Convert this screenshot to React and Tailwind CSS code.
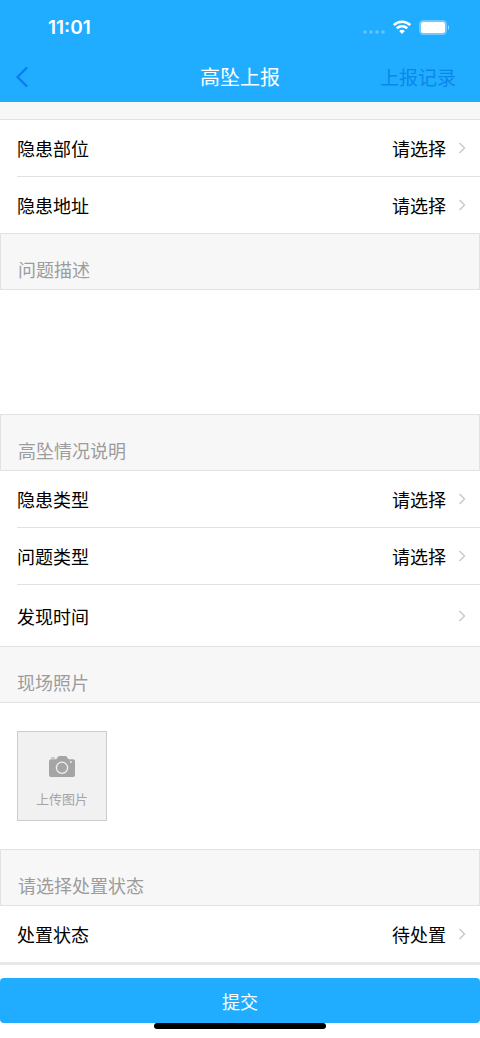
import React, { useState } from 'react';

function Chevron() {
  return (
    <svg width="8" height="12" viewBox="0 0 8 12" fill="none" stroke="#c7c7cc" strokeWidth="1.4" className="flex-shrink-0" aria-hidden="true">
      <path d="M1.5 1l5 5-5 5" />
    </svg>
  );
}

function StatusBar() {
  return (
    <div className="flex h-13 items-center justify-between pl-12 pr-[31px] pt-1">
      <span className="font-['Inter'] text-[19px] leading-7 font-semibold">11:01</span>
      <div className="flex items-center gap-2 pb-[2px]">
        <svg width="22" height="18" viewBox="0 0 22 18" fill="#fff" fillOpacity="0.3" aria-hidden="true">
          <circle cx="2" cy="14" r="1.8" />
          <circle cx="8" cy="14" r="1.8" />
          <circle cx="14" cy="14" r="1.8" />
          <circle cx="20" cy="14" r="1.8" />
        </svg>
        <svg width="18" height="14" viewBox="0 0 18 14" fill="none" stroke="#fff" strokeWidth="2.6" aria-hidden="true">
          <path d="M0.8 5.1a11.8 11.8 0 0 1 16.4 0" />
          <path d="M3.8 8.3a7.5 7.5 0 0 1 10.4 0" />
          <path d="M9 14L6.1 11.1a4.1 4.1 0 0 1 5.800 0z" fill="#fff" stroke="none" />
        </svg>
        <svg width="30" height="15" viewBox="0 0 30 15" fill="#fff" aria-hidden="true">
          <rect width="28" height="15" rx="4.5" fillOpacity="0.35" />
          <rect x="2" y="2" width="24" height="11" rx="2.5" />
          <path d="M29 5.2c1.3.6 1.3 4 0 4.6z" fillOpacity="0.6" />
        </svg>
      </div>
    </div>
  );
}

function NavBar() {
  return (
    <div className="grid h-[50px] grid-cols-3 items-center pl-3 pr-6">
      <button type="button" aria-label="返回" className="justify-self-start p-1">
        <svg width="12" height="20" viewBox="0 0 12 20" fill="none" stroke="#0a7df5" strokeWidth="2.4" strokeLinecap="round" strokeLinejoin="round">
          <path d="M10.500 1L1.500 10l9 9" />
        </svg>
      </button>
      <h1 className="justify-self-center pl-3 text-xl">高坠上报</h1>
      <button type="button" className="justify-self-end text-[19px] text-[#0b87ea]">上报记录</button>
    </div>
  );
}

function SectionTitle({ children, htmlFor, flush }) {
  const Tag = htmlFor ? 'label' : 'h2';
  return (
    <Tag
      htmlFor={htmlFor}
      className={`flex h-[57px] items-center border-[#e2e2e2] bg-[#f7f7f7] px-[17px] pt-[14px] text-lg text-[#9c9c9c] ${flush ? 'border-y' : 'border'}`}
    >
      {children}
    </Tag>
  );
}

function SelectRow({ id, label, options, last }) {
  const [value, setValue] = useState(options[0]);
  return (
    <div className={`ml-[17px] flex items-center justify-between pr-[14px] text-lg text-black ${last ? 'h-14' : 'h-[57px] border-b border-[#e2e2e2]'}`}>
      <label htmlFor={id}>{label}</label>
      <div className="flex items-center gap-3">
        <select
          id={id}
          value={value}
          onChange={(e) => setValue(e.target.value)}
          className="field-sizing-content appearance-none bg-transparent text-right"
        >
          {options.map((o) => <option key={o}>{o}</option>)}
        </select>
        <Chevron />
      </div>
    </div>
  );
}

function UploadButton() {
  return (
    <button type="button" className="flex size-[90px] flex-col items-center justify-center gap-3 border border-[#ccc] bg-[#f1f1f1] pt-3 text-[#a5a5a5]">
      <svg width="26" height="21" viewBox="0 0 26 21" fill="#a5a5a5" aria-hidden="true">
        <path d="M2 1.4h4v1H2zM2 3.2h5.2L9 .8Q9.500 0 10.400 0h6Q17.300 0 17.800.8L19.500 3.200H24q2 0 2 2V19q0 2-2 2H2q-2 0-2-2V5.200q0-2 2-2z" />
        <circle cx="13" cy="11.800" r="5.600" fill="none" stroke="#f1f1f1" strokeWidth="1.300" />
        <circle cx="21.800" cy="6" r="0.900" fill="#f1f1f1" />
      </svg>
      <span className="text-[13px] leading-5">上传图片</span>
    </button>
  );
}

export default function App() {
  return (
    <div className="min-h-screen bg-white font-['Noto_Sans_CJK_SC',sans-serif]">
      <header className="bg-[#21adff] text-white">
        <StatusBar />
        <NavBar />
      </header>

      <form onSubmit={(e) => e.preventDefault()}>
        <div className="h-[18px] border-b border-[#e2e2e2] bg-[#f7f7f7]" />
        <SelectRow id="part" label="隐患部位" options={['请选择']} />
        <SelectRow id="address" label="隐患地址" options={['请选择']} last />

        <SectionTitle htmlFor="description">问题描述</SectionTitle>
        <textarea id="description" className="block h-[124px] w-full resize-none px-[17px] py-3 text-lg outline-none" />

        <SectionTitle>高坠情况说明</SectionTitle>
        <SelectRow id="hazard-type" label="隐患类型" options={['请选择']} />
        <SelectRow id="issue-type" label="问题类型" options={['请选择']} />
        <button type="button" className="flex h-[61px] w-full items-center justify-between pl-[17px] pr-[14px] text-lg text-black">
          发现时间
          <Chevron />
        </button>

        <SectionTitle flush>现场照片</SectionTitle>
        <div className="px-[17px] py-7">
          <UploadButton />
        </div>

        <SectionTitle>请选择处置状态</SectionTitle>
        <SelectRow id="status" label="处置状态" options={['待处置', '已处置']} last />
        <div className="h-[3px] bg-[#e8e8e8]" />

        <button type="submit" className="mt-[13px] h-[45px] w-full rounded-sm bg-[#21adff] text-lg text-white">
          提交
        </button>
      </form>

      {/* home indicator */}
      <div className="mx-auto h-[6px] w-[172px] rounded-full bg-black" />
    </div>
  );
}
